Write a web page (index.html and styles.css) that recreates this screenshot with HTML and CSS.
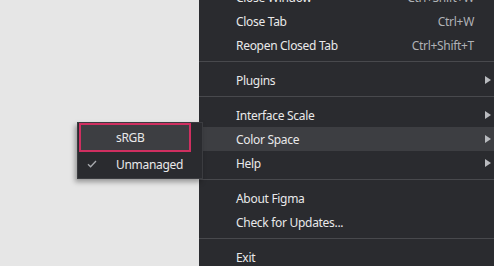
FILE: index.html
```html
<!DOCTYPE html>
<html lang="en">
<head>
  <meta charset="UTF-8" />
  <title>Menu</title>
  <link rel="stylesheet" href="styles.css">
</head>
<body>
  <div class="canvas"></div>
  <div class="menu">
    <div class="item"><span class="label">Close Window</span><span class="shortcut">Ctrl+Shift+W</span></div>
    <div class="item"><span class="label">Close Tab</span><span class="shortcut">Ctrl+W</span></div>
    <div class="item"><span class="label">Reopen Closed Tab</span><span class="shortcut">Ctrl+Shift+T</span></div>
    <div class="separator"></div>
    <div class="item has-sub"><span class="label">Plugins</span><span class="arrow"></span></div>
    <div class="separator"></div>
    <div class="item has-sub"><span class="label">Interface Scale</span><span class="arrow"></span></div>
    <div class="item has-sub active"><span class="label">Color Space</span><span class="arrow"></span></div>
    <div class="item has-sub"><span class="label">Help</span><span class="arrow"></span></div>
    <div class="separator"></div>
    <div class="item"><span class="label">About Figma</span></div>
    <div class="item"><span class="label">Check for Updates...</span></div>
    <div class="separator"></div>
    <div class="item"><span class="label">Exit</span></div>
  </div>

  <div class="submenu">
    <div class="sub-item highlighted"><span class="check"></span><span class="label">sRGB</span></div>
    <div class="sub-item">
      <span class="check">
        <svg width="10" height="8" viewBox="0 0 10 8"><path d="M1 4.2 L3.6 6.8 L9 1" fill="none" stroke="#a9abaf" stroke-width="1.3"/></svg>
      </span>
      <span class="label">Unmanaged</span>
    </div>
  </div>
</body>
</html>
```

FILE: styles.css
```css
:root {
  --menu-bg: #2a2b2f;
  --hover-bg: #3d3e42;
  --line: #48494d;
  --text: #e9e9ea;
  --muted: #b0b2b6;
  --accent: #cf2f60;
}

* {
  box-sizing: border-box;
  margin: 0;
  padding: 0;
}

body {
  width: 494px;
  height: 266px;
  overflow: hidden;
  display: flex;
  background: #e6e6e6;
  font-family: 'Segoe UI', 'Noto Sans', sans-serif;
  font-size: 12px;
  letter-spacing: -0.3px;
  color: var(--text);
  position: relative;
}

.canvas {
  width: 199px;
  flex-shrink: 0;
}

.menu {
  flex: 1;
  background: var(--menu-bg);
  margin-top: -15px;
  padding-bottom: 20px;
}

.item {
  height: 24px;
  display: flex;
  align-items: center;
  padding: 0 20px 0 37px;
  position: relative;
}

.item .label {
  flex: 1;
  white-space: nowrap;
}

.shortcut {
  color: var(--muted);
}

.active {
  background: var(--hover-bg);
}

.arrow {
  position: absolute;
  right: 3px;
  top: 8px;
  width: 0;
  height: 0;
  border-top: 4px solid transparent;
  border-bottom: 4px solid transparent;
  border-left: 6px solid #b9bbbf;
}

.separator {
  height: 1px;
  background: var(--line);
  margin: 4px 0 6px;
}

/* Color Space submenu, opened to the left */
.submenu {
  position: absolute;
  left: 77px;
  top: 122px;
  width: 126px;
  padding: 0 0 2px;
  background: var(--menu-bg);
  border: 1px solid #3b3c40;
  box-shadow: -2px 3px 5px rgba(0, 0, 0, 0.35);
}

.sub-item {
  height: 24px;
  display: flex;
  align-items: center;
  padding-left: 9px;
}

.sub-item .check {
  width: 29px;
  display: flex;
  align-items: center;
}

.highlighted {
  background: var(--hover-bg);
  border: 2px solid var(--accent);
  margin: 0 11px 0 1px;
  padding-left: 6px;
  height: 29px;
}
```
